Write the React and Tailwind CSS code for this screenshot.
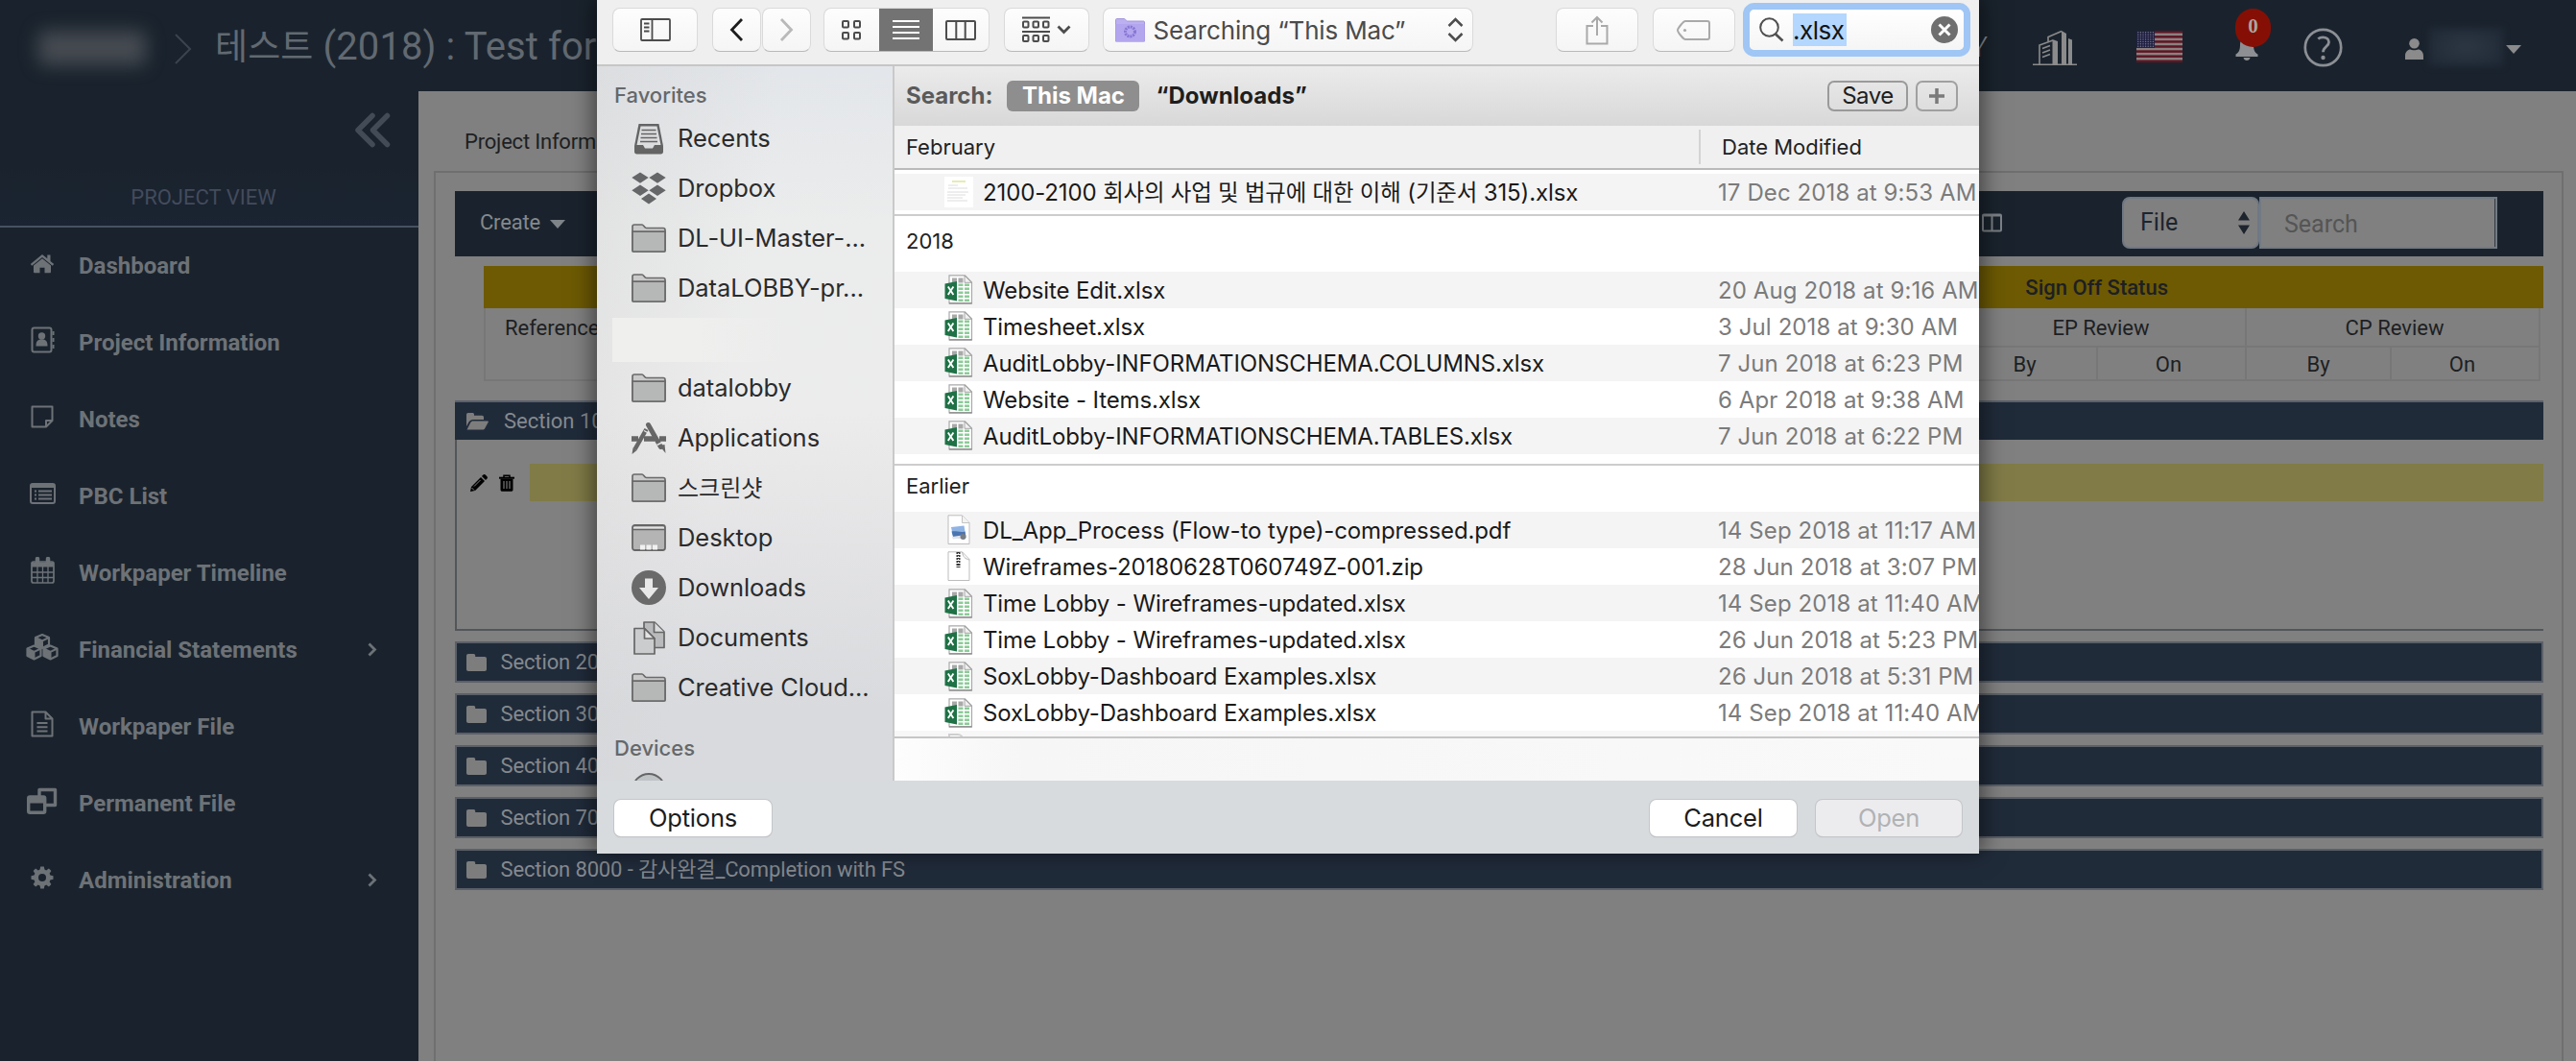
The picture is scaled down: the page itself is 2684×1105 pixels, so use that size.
import React from "react";

/* ---------- page icons ---------- */

const HomeIcon = () => (
  <svg width="26" height="21" viewBox="0 0 26 21" fill="currentColor">
    <path d="M13 5.2 4 12.6V19c0 .8.5 1.3 1.3 1.3h5.2v-5.6h5v5.6h5.2c.8 0 1.3-.5 1.3-1.300v-6.400z" />
    <path d="M13 1 .8 11l1.500 1.700L13 4l10.700 8.700L25.200 11l-3.700-3.100V1.500h-3.200v3.700z" />
  </svg>
);
const AddressIcon = () => (
  <svg width="25" height="28" viewBox="0 0 25 28" fill="none" stroke="currentColor" strokeWidth="2">
    <rect x="1.500" y="1.500" width="20" height="25" rx="2" />
    <path d="M23.500 5v4M23.500 12v4M23.500 19v4" strokeWidth="2" />
    <circle cx="11.500" cy="10" r="3.700" fill="currentColor" stroke="none" />
    <path d="M5.500 20.500c0-5.500 2-7 6-7s6 1.500 6 7z" fill="currentColor" stroke="none" />
  </svg>
);
const NoteIcon = () => (
  <svg width="24" height="24" viewBox="0 0 24 24" fill="none" stroke="currentColor" strokeWidth="2" strokeLinejoin="round">
    <path d="M1.500 1.500h21v14.500l-6.500 6.500H1.500zM22.500 16H16v6.500" />
  </svg>
);
const ListIcon = () => (
  <svg width="27" height="22" viewBox="0 0 27 22" fill="none" stroke="currentColor" strokeWidth="2">
    <rect x="1" y="1" width="25" height="20" rx="2" />
    <path d="M1 3h25" strokeWidth="4" />
    <path d="M5 8.500h2M5 12.500h2M5 16.500h2M9 8.500h14M9 12.500h14M9 16.500h14" />
  </svg>
);
const CalendarIcon = () => (
  <svg width="25" height="28" viewBox="0 0 25 28" fill="none" stroke="currentColor" strokeWidth="1.700">
    <rect x="1" y="5" width="23" height="22" rx="2" />
    <path d="M1 8h23" strokeWidth="5" />
    <path d="M7 10v17M12.500 10v17M18 10v17M1 16h23M1 21.500h23" strokeWidth="1.300" />
    <path d="M7 2v5M18 2v5" strokeWidth="4.500" strokeLinecap="round" />
  </svg>
);
const Cube = ({ x, y }) => (
  <g transform={`translate(${x} ${y})`}>
    <path d="M0-7 7-4v7.500L0 7-7 3.500V-4z" fill="none" stroke="currentColor" strokeWidth="2.200" strokeLinejoin="round" />
    <path d="M-7-4 0-.7 7-4M0-.7V7" fill="none" stroke="currentColor" strokeWidth="2" />
    <path d="M-7-4 0-.7V7l-7-3.500z" fill="currentColor" />
  </g>
);
const CubesIcon = () => (
  <svg width="34" height="28" viewBox="0 0 34 28">
    <Cube x={17} y={8} />
    <Cube x={8.500} y={19.500} />
    <Cube x={25.500} y={19.500} />
  </svg>
);
const FileIcon = () => (
  <svg width="24" height="28" viewBox="0 0 24 28" fill="none" stroke="currentColor" strokeWidth="2" strokeLinejoin="round">
    <path d="M1.500 1.500h14l7 7v18h-21zM15.500 1.500v7h7" />
    <path d="M6.500 13h11M6.500 17.200h11M6.500 21.400h11" />
  </svg>
);
const WindowsIcon = () => (
  <svg width="32" height="28" viewBox="0 0 32 28" fill="none" stroke="currentColor" strokeWidth="3.400">
    <path d="M13 10V2.500h16.500v16H20" strokeLinejoin="round" />
    <rect x="1.700" y="10" width="17" height="16.300" rx="1.500" />
    <path d="M2 13h17" strokeWidth="7" />
  </svg>
);
const GearIcon = ({ className }) => (
  <svg className={className} width="24" height="24" viewBox="0 0 24 24" fill="currentColor">
    <path
      fillRule="evenodd"
      d="M10.200.5h3.600l.6 3.100 1.800.8 2.700-1.800 2.500 2.500-1.800 2.700.8 1.800 3.100.6v3.600l-3.100.6-.8 1.800 1.800 2.700-2.500 2.500-2.700-1.800-1.800.8-.6 3.100h-3.600l-.6-3.100-1.800-.8-2.700 1.800-2.500-2.500 1.800-2.700-.8-1.800-3.100-.6v-3.600l3.100-.6.8-1.800-1.800-2.700 2.500-2.500 2.700 1.800 1.800-.8zM12 8a4 4 0 1 0 0 8 4 4 0 0 0 0-8z"
    />
  </svg>
);
const ChevronSmall = () => (
  <svg width="10" height="15" viewBox="0 0 10 15" fill="none" stroke="currentColor" strokeWidth="2.800">
    <path d="m1.500 1.500 6 6-6 6" />
  </svg>
);
const FolderClosed = () => (
  <svg width="21" height="18" viewBox="0 0 21 18" fill="#7d7d7d">
    <path d="M2 0h5.500c1 0 1.700.8 1.700 1.700V3H19c1.200 0 2 .8 2 2v11c0 1.200-.8 2-2 2H2c-1.200 0-2-.8-2-2V2C0 .8.800 0 2 0z" />
  </svg>
);
const FolderOpen = () => (
  <svg width="23" height="18" viewBox="0 0 23 18" fill="#7d7d7d">
    <path d="M0 14V1.800C0 .8.800 0 1.800 0h4.500c1 0 1.700.7 1.700 1.700v1h8.200c1 0 1.800.8 1.800 1.800V7H7C5 7 3.500 8 2.500 9.500z" />
    <path d="M.5 17.500 4.300 10c.5-.9 1.600-1.600 2.700-1.600h15c.8 0 1.200.5.8 1.200L19.300 16c-.5.900-1.600 1.600-2.700 1.600z" />
  </svg>
);
const PencilIcon = () => (
  <svg width="18" height="18" viewBox="0 0 18 18" fill="#000">
    <path d="m11 3 4 4L5 17l-5 1 1-5zM12 2l1.400-1.400c.7-.7 1.700-.7 2.400 0l1.600 1.600c.7.700.7 1.700 0 2.400L16 6z" />
    <path d="m4 12.500 6.500-6.500" stroke="#808080" strokeWidth="1" />
    <path d="m1.500 14 2.500 2.500" stroke="#808080" strokeWidth="1" />
  </svg>
);
const TrashIcon = () => (
  <svg width="16" height="18" viewBox="0 0 16 18" fill="none" stroke="#000">
    <path d="M5 3V1.200h6V3" strokeWidth="1.500" />
    <path d="M0 3.700h16" strokeWidth="2" />
    <path d="M1.500 4.500h13V16c0 1-.8 1.800-1.800 1.800H3.300c-1 0-1.800-.8-1.800-1.800z" fill="#000" stroke="none" />
    <path d="M5 7v8M8 7v8M11 7v8" stroke="#808080" strokeWidth="1.100" />
  </svg>
);
const BuildingIcon = () => (
  <svg width="46" height="38" viewBox="0 0 46 38" fill="none" stroke="#8b8b8b" strokeWidth="1.600">
    <path d="M0 36.200h46" />
    <path d="M7 36V16l14-5M16 12V7.500l14-6" />
    <path d="M10 19.500l8-3M10 24l8-3M10 28.500l8-3" />
    <path d="M20.500 36V10l5.500 2v24zM30 36V1l5 3v32z" fill="#8b8b8b" stroke="none" />
    <path d="M37 36V9l4 1.500V36z" fill="#8b8b8b" stroke="none" />
  </svg>
);
const stripes = [0, 1, 2, 3, 4, 5, 6];
const FlagIcon = () => (
  <svg width="48" height="33" viewBox="0 0 48 33">
    <rect width="48" height="33" fill="#8b8080" />
    {stripes.map((i) => (
      <rect key={i} y={i * 5.080} width="48" height="2.540" fill="#5e1624" />
    ))}
    <rect width="19" height="17.800" fill="#1f1f42" />
    {stripes.map((r) =>
      stripes.map((c) => (
        <circle key={`${r}-${c}`} cx={1.800 + c * 2.600} cy={1.800 + r * 2.400} r=".7" fill="#77778c" />
      ))
    )}
  </svg>
);
const QuestionIcon = () => (
  <svg width="41" height="41" viewBox="0 0 41 41" fill="none" stroke="#8c8f94">
    <circle cx="20.500" cy="20.500" r="18.700" strokeWidth="2.700" />
    <path d="M15.300 11.500c1-.9 2.800-1.700 5-1.700 4 0 6.200 2.200 6.200 5.100 0 4.400-6 4.900-6 10.300" strokeWidth="2.800" />
    <circle cx="20.500" cy="31" r="2.200" fill="#8c8f94" stroke="none" />
  </svg>
);

/* ---------- finder icons ---------- */

const FinderFolder = () => (
  <svg width="36" height="30" viewBox="0 0 36 30">
    <path d="M1 27.500V3c0-1.100.9-2 2-2h8c1.500 0 2.500 3.500 4.500 3.500H33c1.100 0 2 .9 2 2v21c0 .8-.7 1.500-1.500 1.500h-31C1.700 29 1 28.300 1 27.500z" fill="#c9c9c9" stroke="#6a6a6a" strokeWidth="1.700" />
    <path d="M1 8.200h34V28c0 .6-.4 1-1 1H2c-.6 0-1-.4-1-1z" fill="#b6b7b7" stroke="#6a6a6a" strokeWidth="1.700" />
  </svg>
);
const RecentsIcon = () => (
  <svg width="32" height="33" viewBox="0 0 32 33">
    <path d="M5.500 1h21L31 24v6c0 1.500-1 2.500-2.500 2.500h-25C2 32.500 1 31.500 1 30v-6z" fill="#646464" />
    <path d="M7.500 3.500h17l4 19.500H22l-2 3.500h-8L10 23H3.500z" fill="#dcdddf" />
    <path d="M8.500 7.500h15M8 11.500h16M7.500 15.500h17M7 19.500h18" stroke="#646464" strokeWidth="1.700" />
  </svg>
);
const DropboxIcon = () => (
  <svg width="36" height="34" viewBox="0 0 36 34" fill="#656667">
    <path d="M9 .5 17.700 6 9 11.700.3 6zM27 .5 35.700 6 27 11.700 18.300 6zM9 13.500l8.700 5.700L9 25 .3 19.200zM27 13.500l8.700 5.700L27 25l-8.700-5.800zM18 22.500l8 5.500-8 5.500-8-5.500z" />
  </svg>
);
const ApplicationsIcon = () => (
  <svg width="36" height="34" viewBox="0 0 36 34" fill="none" stroke="#666">
    <path d="M0 18h7M13 18h11M29 18h7" strokeWidth="5.500" />
    <path d="m17.500 3.500 13 23" strokeWidth="5" strokeLinecap="round" />
    <path d="M15.500 8 3.500 29" strokeWidth="4.500" />
    <path d="M13 9.500l4.500 2.500" stroke="#e8e8ea" strokeWidth="1.300" />
    <path d="M26.500 24.500l6-3" stroke="#e5e5e7" strokeWidth="1.500" />
    <path d="m29 25 5.500-1 1 9z M1.500 27.500l4 2.500-5 4z" fill="#666" stroke="none" />
  </svg>
);
const DesktopIcon = () => (
  <svg width="36" height="28" viewBox="0 0 36 28">
    <rect x="1" y="1" width="34" height="26" rx="2.500" fill="#b4b4b4" stroke="#666" strokeWidth="1.800" />
    <path d="M2 3.800h32" stroke="#e3e3e3" strokeWidth="2" />
    <path d="M1 5.500h34" stroke="#666" strokeWidth="1.500" />
    <path d="M9 24h5M15.500 24h5M22 24h5" stroke="#f1f1f1" strokeWidth="5" />
  </svg>
);
const DownloadsIcon = () => (
  <svg width="36" height="36" viewBox="0 0 36 36">
    <circle cx="18" cy="18" r="18" fill="#6a6a6a" />
    <path d="M14 8.500h8V18h6L18 30 8 18h6z" fill="#e8e8e8" />
  </svg>
);
const DocumentsIcon = () => (
  <svg width="34" height="35" viewBox="0 0 34 35" stroke="#666" strokeWidth="1.700" strokeLinejoin="round">
    <path d="M12 1h11l10 10v16.500H12z" fill="#b9babb" />
    <path d="M22.500 1v10.500H33" fill="#d9dadb" />
    <path d="M2 7.500h10.500L23 18v16H2z" fill="#cbcccd" />
    <path d="M12.500 7.500V18H23z" fill="#e3e3e4" />
  </svg>
);
const DiskIcon = () => (
  <svg width="36" height="36" viewBox="0 0 36 36">
    <circle cx="18" cy="18" r="17" fill="#bfc3c6" stroke="#666" strokeWidth="1.800" />
  </svg>
);
const ExcelIcon = () => (
  <svg width="30" height="31" viewBox="0 0 30 31">
    <path d="M5 .8h16.500L28.500 8v21.800H5z" fill="#fff" stroke="#a9a9a9" strokeWidth="1.200" />
    <path d="M5 29.900h23.700" stroke="#8a8a8a" strokeWidth="1.300" />
    <path d="M8 3.500h5v5H8zM14.500 3.500h5v5h-5z" fill="#a9a9a9" />
    <path d="M21 1v7.300h7.200z" fill="#f1f1f1" stroke="#9c9c9c" strokeWidth=".9" />
    <path d="M14.500 9.500h5v2.500h-5zM14.500 13.500h5v2.500h-5zM14.500 17.500h5V20h-5zM14.500 21.500h5V24h-5zM14.500 25.500h5V28h-5zM21 9.500h5v2.500h-5zM21 13.500h5v2.500h-5zM21 17.500h5V20h-5zM21 21.500h5V24h-5zM21 25.500h5V28h-5z" fill="#8ccb98" />
    <path d="M.5 9.500 13 7v20.500L.5 25z" fill="#1f7246" />
    <path d="m3.800 12.500 5.600 8.500M9.400 12.500 3.800 21" stroke="#fff" strokeWidth="1.900" />
  </svg>
);
const pageOutline = "M1 .8h14.500L23 8.500v22H1z";
const PdfIcon = () => (
  <svg width="24" height="32" viewBox="0 0 24 32">
    <path d={pageOutline} fill="#fff" stroke="#bdbdbd" />
    <path d="M15.500 1v7.500H23" fill="#f3f3f3" stroke="#c4c4c4" />
    <path d="m4 13 13.500-1.500L19.500 24l-13 1z" fill="#8fb4e3" />
    <path d="M4.500 17.500c5-1 9 1.500 14 0l.8 4.500-13 2z" fill="#4a74b0" />
    <path d="m5 23 14-2 .8 3-14 1.500z" fill="#dfe3e8" />
    <circle cx="16.500" cy="23" r="3" fill="#777c85" />
  </svg>
);
const ZipIcon = () => (
  <svg width="24" height="32" viewBox="0 0 24 32">
    <path d={pageOutline} fill="#fff" stroke="#bdbdbd" />
    <path d="M15.500 1c1 5 3 7 7.500 8" fill="none" stroke="#b4b4b4" />
    <path d="M11.500 1v16" stroke="#333" strokeWidth="4" strokeDasharray="2 1" />
    <path d="M11.500 2v10" stroke="#ddd" strokeWidth="1" strokeDasharray="1 2" />
  </svg>
);
const SheetThumb = () => (
  <svg width="30" height="32" viewBox="0 0 30 32">
    <rect width="30" height="32" fill="#fff" />
    <path d="M8 5h14" stroke="#dfe59a" strokeWidth="1.500" />
    <path d="M4 9h10M4 12h20M3 16h22M3 19h19M3 22h16M3 25h21" stroke="#dcdcdc" strokeWidth="1" />
  </svg>
);
const fileIcons = { xls: ExcelIcon, pdf: PdfIcon, zip: ZipIcon, thumb: SheetThumb };

/* ---------- data ---------- */

const menu = [
  { label: "Dashboard", Icon: HomeIcon },
  { label: "Project Information", Icon: AddressIcon },
  { label: "Notes", Icon: NoteIcon },
  { label: "PBC List", Icon: ListIcon },
  { label: "Workpaper Timeline", Icon: CalendarIcon },
  { label: "Financial Statements", Icon: CubesIcon, more: true },
  { label: "Workpaper File", Icon: FileIcon },
  { label: "Permanent File", Icon: WindowsIcon },
  { label: "Administration", Icon: GearIcon, more: true },
];

const sections = [
  "Section 2000",
  "Section 3000",
  "Section 4000",
  "Section 7000",
  "Section 8000 - 감사완결_Completion with FS",
];

const places = [
  { label: "Recents", Icon: RecentsIcon },
  { label: "Dropbox", Icon: DropboxIcon },
  { label: "DL-UI-Master-...", Icon: FinderFolder },
  { label: "DataLOBBY-pr...", Icon: FinderFolder },
  null,
  { label: "datalobby", Icon: FinderFolder },
  { label: "Applications", Icon: ApplicationsIcon },
  { label: "스크린샷", Icon: FinderFolder, korean: true },
  { label: "Desktop", Icon: DesktopIcon },
  { label: "Downloads", Icon: DownloadsIcon },
  { label: "Documents", Icon: DocumentsIcon },
  { label: "Creative Cloud...", Icon: FinderFolder },
];

const files2018 = [
  ["xls", "Website Edit.xlsx", "20 Aug 2018 at 9:16 AM"],
  ["xls", "Timesheet.xlsx", "3 Jul 2018 at 9:30 AM"],
  ["xls", "AuditLobby-INFORMATIONSCHEMA.COLUMNS.xlsx", "7 Jun 2018 at 6:23 PM"],
  ["xls", "Website - Items.xlsx", "6 Apr 2018 at 9:38 AM"],
  ["xls", "AuditLobby-INFORMATIONSCHEMA.TABLES.xlsx", "7 Jun 2018 at 6:22 PM"],
];
const filesEarlier = [
  ["pdf", "DL_App_Process (Flow-to type)-compressed.pdf", "14 Sep 2018 at 11:17 AM"],
  ["zip", "Wireframes-20180628T060749Z-001.zip", "28 Jun 2018 at 3:07 PM"],
  ["xls", "Time Lobby - Wireframes-updated.xlsx", "14 Sep 2018 at 11:40 AM"],
  ["xls", "Time Lobby - Wireframes-updated.xlsx", "26 Jun 2018 at 5:23 PM"],
  ["xls", "SoxLobby-Dashboard Examples.xlsx", "26 Jun 2018 at 5:31 PM"],
  ["xls", "SoxLobby-Dashboard Examples.xlsx", "14 Sep 2018 at 11:40 AM"],
];

/* ---------- page ---------- */

function Header() {
  return (
    <header className="flex h-[95px] shrink-0 items-start bg-[#1a232d]">
      <div className="ml-[40px] mt-[32px] h-[36px] w-[112px] rounded-lg bg-[#454a51] blur-[9px]" />
      <svg className="ml-[29px] mt-[35px]" width="20" height="32" viewBox="0 0 20 32" fill="none" stroke="#3b4350" strokeWidth="2">
        <path d="m2 1 15 15L2 31" />
      </svg>
      <div className="ml-[23px] flex h-[60px] items-baseline whitespace-pre pt-[19px] text-[40px] leading-[60px] tracking-[0.100px] text-[#626971]">
        <span className="text-[37px]">테스트</span>
        <span> (2018) : Test for</span>
      </div>
      <div className="ml-auto flex items-start pr-[57px]">
        <span className="mt-[31px] text-[30px] font-light leading-[36px] text-[#8b8f94]">Y</span>
        <div className="ml-[47px] mt-[31px]"><BuildingIcon /></div>
        <div className="ml-[62px] mt-[32px]"><FlagIcon /></div>
        <div className="relative ml-[55px] mt-[9px] h-[60px] w-[37px]">
          <svg className="mt-[29px]" width="24" height="26" viewBox="0 0 24 26" fill="#8d8f92">
            <path d="M12 0c5 1 7 4 7 9 0 6 2 8 4.500 9.500V21H.5v-2.500C3 17 5 15 5 9c0-5 2-8 7-9zM8.500 22h7c-.5 4-6.500 4-7 0z" />
          </svg>
          <span className="absolute left-0 top-0 flex h-[40px] w-[37px] items-center justify-center rounded-full bg-[#860f05] pb-[2px] font-['Liberation_Serif',serif] text-[21px] font-bold text-[#aaa6a3]">
            0
          </span>
        </div>
        <div className="ml-[34px] mt-[29px]"><QuestionIcon /></div>
        <svg className="ml-[65px] mt-[40px]" width="19" height="22" viewBox="0 0 19 22" fill="#8b8b8b">
          <circle cx="9.500" cy="5.300" r="5.300" />
          <path d="M0 22v-4c0-4 3-6.500 5.500-6.500 1 1 6.500 1 8 0C16 11.500 19 14 19 18v4z" />
        </svg>
        <div className="ml-[6px] mt-[29px] h-[40px] w-[77px] bg-[radial-gradient(#2d3643,#1e2835)] blur-[3px]" />
        <svg className="ml-[3px] mt-[47px]" width="16" height="9" viewBox="0 0 16 9" fill="#8b8b8b"><path d="M0 0h16L8 9z" /></svg>
      </div>
    </header>
  );
}

function Sidebar() {
  return (
    <nav className="flex w-[436px] shrink-0 flex-col bg-[#1a232d]">
      <div className="flex h-[80px] items-center justify-end pr-[29px]">
        <svg width="38" height="37" viewBox="0 0 38 37" fill="none" stroke="#434b56" strokeWidth="5.500" strokeLinecap="round" strokeLinejoin="round">
          <path d="M19 3.500 4 18.500 19 33.500M34.500 3.500 19.500 18.500 34.500 33.500" />
        </svg>
      </div>
      <div className="flex h-[62px] items-center justify-center border-b-2 border-[#465161] bg-[linear-gradient(#1a232d,#1a2432)] pr-[12px] text-[22px] text-[#434b5c]">
        PROJECT VIEW
      </div>
      {menu.map(({ label, Icon, more }) => (
        <div key={label} className="flex h-[80.050px] items-center text-[24px] font-bold text-[#6d7277]">
          <span className="ml-[26px] flex w-[36px] justify-center pb-[6px]"><Icon /></span>
          <span className="ml-[20px]">{label}</span>
          {more && <span className="ml-auto mr-[43px] pb-[2px]"><ChevronSmall /></span>}
        </div>
      ))}
    </nav>
  );
}

function Review({ title, className }) {
  return (
    <div className={`flex flex-col border-r-2 border-[#777] text-center ${className}`}>
      <div className="h-[41px] border-b-2 border-[#777] pl-[4px] leading-[41px]">{title}</div>
      <div className="flex h-[34px] leading-[36px]">
        <span className="w-[151px] border-r-2 border-[#777]">By</span>
        <span className="flex-1 pr-[6px]">On</span>
      </div>
    </div>
  );
}

function Main() {
  return (
    <main className="flex flex-1 flex-col bg-[#808080] text-[22px] text-[#1d1f23]">
      <div className="h-[83px] pl-[48px] pt-[39px] leading-[27px] tracking-[-0.200px]">Project Information</div>
      <div className="ml-[16px] w-[2219px] flex-1 border-2 border-b-0 border-[#6f6f6f] pl-[20px] pt-[19px]">
        <div className="flex h-[68px] w-[2176px] items-center bg-[#1a232d] pl-[26px] pr-[48px]">
          <span className="pb-[3px] tracking-[-0.200px] text-[#85898e]">Create</span>
          <svg className="ml-[10px]" width="16" height="9" viewBox="0 0 16 9" fill="#7f8489"><path d="M0 0h16L8 9z" /></svg>
          <svg className="mb-[3px] ml-auto" width="21" height="20" viewBox="0 0 21 20" fill="none" stroke="#7d8287" strokeWidth="2">
            <rect x="1" y="1.500" width="19" height="17" rx="1" />
            <path d="M10.500 1v18M1 2.500h19" />
          </svg>
          <div className="mb-[2px] ml-[125px] flex h-[54px] w-[143px] items-center rounded-[8px] border-2 border-[#6e7884] bg-[#808080] pl-[17px] pr-[8px] text-[25px] text-[#1d242d]">
            <span>File</span>
            <svg className="ml-auto" width="12" height="24" viewBox="0 0 12 24" fill="#1d242d"><path d="M6 0l6 9.500H0zM6 24l6-9.500H0z" /></svg>
          </div>
          <div className="mb-[2px] flex h-[54px] w-[248px] items-center border-2 border-[#727a83] bg-[#808080] pl-[24px] pt-[4px] text-[25px] text-[#555]">
            <span className="flex-1">Search</span>
            <span className="-mt-[4px] h-[50px] w-px bg-[#333b46]" />
          </div>
        </div>
        <div className="ml-[30px] mt-[10px] w-[2146px]">
          <div className="flex h-[44px] justify-end bg-[#6d5a03] font-medium leading-[45px]">
            <span className="mr-[391px]">Sign Off Status</span>
          </div>
          <div className="flex h-[76px] w-[2143px] border-b-2 border-l-2 border-[#777]">
            <span className="flex-1 border-r-2 border-[#777] pl-[20px] leading-[41px]">Reference</span>
            <Review title="EP Review" className="w-[306px]" />
            <Review title="CP Review" className="w-[306px]" />
          </div>
        </div>
        <div className="mt-[20px] w-[2176px]">
          <div className="flex h-[41px] items-center border-t-2 border-[#5b626c] bg-[#202b3a] pl-[12px] text-[#85898e]">
            <FolderOpen />
            <span className="ml-[16px]">Section 1000</span>
          </div>
          <div className="h-[199px] border-b-2 border-l-2 border-[#52565a] pt-[25px]">
            <div className="flex h-[39px] items-center">
              <span className="ml-[14px]"><PencilIcon /></span>
              <span className="ml-[12px]"><TrashIcon /></span>
              <span className="ml-[16px] h-[39px] flex-1 bg-[#807b47]" />
            </div>
          </div>
        </div>
        <div className="mt-[11px] flex w-[2176px] flex-col gap-[11px]">
          {sections.map((s) => (
            <div key={s} className="flex h-[43px] items-center border-2 border-[#5b6068] bg-[#202b3a] pl-[10px] text-[#85898e]">
              <FolderClosed />
              <span className="ml-[14.500px] tracking-[-0.130px]">{s}</span>
            </div>
          ))}
        </div>
      </div>
    </main>
  );
}

/* ---------- open-file dialog ---------- */

function ToolButton({ className, children }) {
  return (
    <div className={`flex h-[46px] shrink-0 items-center justify-center rounded-[8px] border border-[#dadada] border-b-[#b9b9b9] bg-[linear-gradient(#fdfdfd,#f5f5f5)] ${className}`}>
      {children}
    </div>
  );
}

const gridCells = [0, 12];
function DialogToolbar() {
  return (
    <div className="flex h-[69px] items-start border-b-2 border-[#c6c6c6] bg-[#efefef] pl-[16px] pt-[8px]">
      <ToolButton className="w-[89px]">
        <svg width="32" height="24" viewBox="0 0 32 24" fill="none" stroke="#4c4c4c" strokeWidth="1.800">
          <rect x="1" y="1" width="30" height="22" rx="1" />
          <path d="M12.500 1v22M4 5.500h5.500M4 9.500h5.500M4 13.500h5.500" />
        </svg>
      </ToolButton>
      <ToolButton className="ml-[14.500px] w-[51px]">
        <svg width="15" height="26" viewBox="0 0 15 26" fill="none" stroke="#1d1d1d" strokeWidth="2.800"><path d="M13 2 2.500 13 13 24" /></svg>
      </ToolButton>
      <ToolButton className="ml-px w-[51px]">
        <svg width="15" height="26" viewBox="0 0 15 26" fill="none" stroke="#b9b9b9" strokeWidth="2.800"><path d="m2 2 10.500 11L2 24" /></svg>
      </ToolButton>
      <ToolButton className="ml-[13px] w-[173px] overflow-hidden">
        <span className="flex flex-1 justify-center">
          <svg width="20" height="21" viewBox="0 0 20 21" fill="none" stroke="#4c4c4c" strokeWidth="2">
            {gridCells.map((x) => gridCells.map((y) => <rect key={`${x}${y}`} x={x + 1} y={y + 1} width="6" height="6.500" rx="1" />))}
          </svg>
        </span>
        <span className="flex h-[46px] w-[56px] items-center justify-center bg-[#737373]">
          <svg width="28" height="22" viewBox="0 0 28 22" stroke="#fff" strokeWidth="2"><path d="M0 2h28M0 8h28M0 14h28M0 20h28" /></svg>
        </span>
        <span className="flex flex-1 justify-center">
          <svg width="32" height="21" viewBox="0 0 32 21" fill="none" stroke="#4c4c4c" strokeWidth="2">
            <rect x="1" y="1" width="30" height="19" rx="1" />
            <path d="M11.300 1v19M20.700 1v19" />
          </svg>
        </span>
      </ToolButton>
      <ToolButton className="ml-[15px] w-[89px] gap-[7px]">
        <svg width="29" height="28" viewBox="0 0 29 28" fill="none" stroke="#4c4c4c" strokeWidth="2">
          <path d="M0 1.500h29M0 16h29" />
          {[1, 11.500, 22].map((x) => [5.500, 20].map((y) => <rect key={`${x}-${y}`} x={x} y={y} width="5.500" height="6" rx="1" />))}
        </svg>
        <svg width="15" height="10" viewBox="0 0 15 10" fill="none" stroke="#4c4c4c" strokeWidth="2.800"><path d="m1.500 1.500 6 6 6-6" /></svg>
      </ToolButton>
      <ToolButton className="ml-[14px] w-[386px] !justify-start pl-[12px] pr-[9px]">
        <svg width="31" height="25" viewBox="0 0 31 25">
          <path d="M.5 24V1.500C.5 1 1 .5 1.500.5h8c1 0 2 2.500 3 2.500h17c.5 0 1 .5 1 1v20z" fill="#bdb0f0" stroke="#a496de" />
          <path d="M.5 6h30v18.500H.5z" fill="#b3a6ee" />
          <circle cx="15.500" cy="14" r="5" fill="none" stroke="#8876d4" strokeWidth="3" strokeDasharray="2 .9" />
        </svg>
        <span className="ml-[9px] text-[26px] tracking-[-0.150px] text-[#4b4b4b]">Searching “This Mac”</span>
        <svg className="ml-auto" width="17" height="26" viewBox="0 0 17 26" fill="none" stroke="#4c4c4c" strokeWidth="2.500"><path d="m1.500 9 7-7 7 7M1.500 17l7 7 7-7" /></svg>
      </ToolButton>
      <ToolButton className="ml-[86.500px] w-[86px]">
        <svg width="24" height="31" viewBox="0 0 24 31" fill="none" stroke="#a9a9a9" strokeWidth="2">
          <path d="M8 11H1.500v18.500h21V11H16M12 21V2M6.500 7.500 12 2l5.500 5.500" />
        </svg>
      </ToolButton>
      <ToolButton className="ml-[14.500px] w-[86px]">
        <svg width="35" height="21" viewBox="0 0 35 21" fill="none" stroke="#a9a9a9" strokeWidth="2">
          <path d="M9 1h23c1.100 0 2 .9 2 2v15c0 1.100-.9 2-2 2H9c-2 0-8-7.500-8-9.500S7 1 9 1z" />
          <circle cx="8.500" cy="10.500" r="1.600" fill="#a9a9a9" stroke="none" />
        </svg>
      </ToolButton>
      <div className="ml-[15.500px] mt-[2px] flex h-[42px] w-[223px] items-center rounded-[5px] bg-[linear-gradient(#fff,#f5f5f5)] pl-[10px] pr-[6px] shadow-[0_0_0_7px_#9fc6f5]">
        <svg width="26" height="26" viewBox="0 0 26 26" fill="none" stroke="#4f4f4f" strokeWidth="2">
          <circle cx="10.500" cy="10.500" r="9.300" />
          <path d="m17 17.500 7.500 7" strokeWidth="2.600" />
        </svg>
        <span className="ml-[9px] flex h-[34px] items-center bg-[#b3d7fe] pr-[3px] text-[26px] tracking-[-0.500px] text-[#141414]">.xlsx</span>
        <svg className="ml-auto" width="28" height="28" viewBox="0 0 28 28">
          <circle cx="14" cy="14" r="14" fill="#6f6f6f" />
          <path d="m8.500 8.500 11 11M19.500 8.500l-11 11" stroke="#fff" strokeWidth="3" />
        </svg>
      </div>
    </div>
  );
}

function DialogSidebar() {
  return (
    <aside className="flex w-[308px] shrink-0 flex-col overflow-hidden bg-[linear-gradient(100deg,rgba(205,205,205,0.350),rgba(255,255,255,0)_45%),linear-gradient(#e3e6ea_0%,#ebecec_22%,#ececec_48%,#e3e3e5_68%,#d8dadd_90%)]">
      <div className="h-[49.500px] shrink-0 pl-[18px] pt-[17px] text-[22px] font-medium leading-[27px] text-[#66686b]">Favorites</div>
      <div>
        {places.map((p, i) =>
          p ? (
            <div key={p.label} className="flex h-[52px] items-center text-[25.500px] text-[#2a2b2d]">
              <span className="ml-[35px] flex w-[38px] justify-center pb-px">
                <p.Icon />
              </span>
              {p.korean ? (
                <span className="ml-[11px] text-[24px]">{p.label}</span>
              ) : (
                <span className="ml-[11px] tracking-[-0.050px]">{p.label}</span>
              )}
            </div>
          ) : (
            <div key={i} className="flex h-[52px] items-center">
              <span className="ml-[16px] mt-[3px] h-[46px] w-[180px] bg-[linear-gradient(90deg,#efefee_50%,rgba(239,239,239,0))]" />
            </div>
          )
        )}
      </div>
      <div className="h-[62px] shrink-0 pl-[18px] pt-[23px] text-[22px] font-medium leading-[27px] text-[#66686b]">Devices</div>
      <span className="ml-[36px]"><DiskIcon /></span>
    </aside>
  );
}

function FileRow({ file, shaded }) {
  const [kind, name, date] = file;
  const Icon = fileIcons[kind];
  return (
    <div className={`grid h-[38px] shrink-0 grid-cols-[92px_766px_1fr] items-center whitespace-nowrap text-[24px] leading-[38px] ${shaded ? "bg-[#f4f4f4]" : "bg-white"}`}>
      <span className="mr-[9px] flex h-[38px] w-[32px] items-center justify-center justify-self-end"><Icon /></span>
      <span className="pt-px leading-[37px] tracking-[-0.120px] text-[#1a1a1a]">{name}</span>
      <span className="pt-px leading-[37px] tracking-[0.100px] text-[#7b7b7b]">{date}</span>
    </div>
  );
}

function FileList() {
  return (
    <div className="flex w-[1132px] flex-col border-l-2 border-[#c9c9c9] bg-white">
      <div className="flex h-[62px] items-center bg-[linear-gradient(#ebebeb,#d8d8d8)] pl-[12px] pr-[22px] text-[24px] font-bold text-[#1e1e1e]">
        <span className="text-[#5a5a5a]">Search:</span>
        <span className="ml-[15px] flex h-[32px] w-[138px] items-center justify-center rounded-[6px] bg-[#8e8e8e] text-white">This Mac</span>
        <span className="ml-[17px] tracking-[0.050px]">“Downloads”</span>
        <span className="ml-auto flex h-[32px] w-[84px] items-center justify-center rounded-[7px] border-2 border-[#9a9a9a] font-normal tracking-[-0.500px]">Save</span>
        <span className="ml-[8px] flex h-[32px] w-[44px] items-center justify-center rounded-[7px] border-2 border-[#a0a0a0]">
          <svg width="16" height="16" viewBox="0 0 16 16" stroke="#7a7a7a" strokeWidth="3.500"><path d="M8 0v16M0 8h16" /></svg>
        </span>
      </div>
      <div className="flex h-[46px] items-center border-b-2 border-[#bababa] bg-[#f0f0f0] pl-[12px] text-[22px] text-[#222]">
        <span className="w-[826px]">February</span>
        <span className="h-[36px] w-[2px] bg-[#d4d4d4]" />
        <span className="ml-[22px]">Date Modified</span>
      </div>
      <div className="mt-[4px] h-[44px] border-b-2 border-[#cdcdcd]">
        <FileRow
          shaded
          file={[
            "thumb",
            <>
              2100-2100 <span className="text-[23.400px]">회사의 사업 및 법규에 대한 이해</span> (<span className="text-[23.400px]">기준서</span> 315).xlsx
            </>,
            "17 Dec 2018 at 9:53 AM",
          ]}
        />
      </div>
      <div className="h-[57.500px] pl-[12px] pt-[12.500px] text-[22px] leading-[27px] text-[#222]">2018</div>
      {files2018.map((f, i) => <FileRow key={i} file={f} shaded={i % 2 === 0} />)}
      <div className="h-[12px] border-b-2 border-[#cdcdcd]" />
      <div className="h-[48.500px] pl-[12px] pt-[8px] text-[22px] leading-[27px] text-[#222]">Earlier</div>
      {filesEarlier.map((f, i) => <FileRow key={i} file={f} shaded={i % 2 === 0} />)}
      <div className="flex flex-1 flex-col overflow-hidden border-b-2 border-[#c6c6c6] bg-[#f7f7f7] pl-[56px]">
        <span className="mt-[3px] h-[20px] w-[16px] shrink-0 rounded-tr-md border-2 border-[#cfcfcf] bg-white" />
      </div>
      <div className="h-[44px] bg-[linear-gradient(90deg,#fdfdfd,#f6f6f6_12%,#f9f9f9)]" />
    </div>
  );
}

function PushButton({ className, children }) {
  return (
    <button className={`flex h-[38px] items-center justify-center rounded-[7px] text-[25.500px] tracking-[-0.200px] shadow-[0_0_0_1px_#c4c6c8,0_1px_1px_#a9abad] ${className}`}>
      {children}
    </button>
  );
}

function OpenDialog() {
  return (
    <div className="absolute left-[622px] top-0 flex h-[889px] w-[1440px] flex-col overflow-hidden bg-[#d8dbde] font-[Inter,'Noto_Sans_CJK_KR',sans-serif]">
      <DialogToolbar />
      <div className="flex h-[744px]">
        <DialogSidebar />
        <FileList />
      </div>
      <div className="flex flex-1 items-start pl-[18px] pr-[18px] pt-[20px]">
        <PushButton className="w-[164px] bg-white text-[#1c1c1c]">Options</PushButton>
        <PushButton className="ml-auto w-[153px] bg-white text-[#1c1c1c]">Cancel</PushButton>
        <PushButton className="ml-[20px] w-[152px] bg-[#ececef] text-[#b1b2b4]">Open</PushButton>
      </div>
    </div>
  );
}

export default function App() {
  return (
    <div className="relative flex h-[1105px] w-[2684px] flex-col overflow-hidden bg-[#808080] font-[Roboto,'Noto_Sans_CJK_KR',sans-serif]">
      <Header />
      <div className="flex flex-1">
        <Sidebar />
        <Main />
      </div>
      <div className="absolute left-[622px] top-0 h-[885px] w-[1440px] shadow-[0_0_22px_4px_rgba(0,0,0,0.500)]" />
      <OpenDialog />
    </div>
  );
}
